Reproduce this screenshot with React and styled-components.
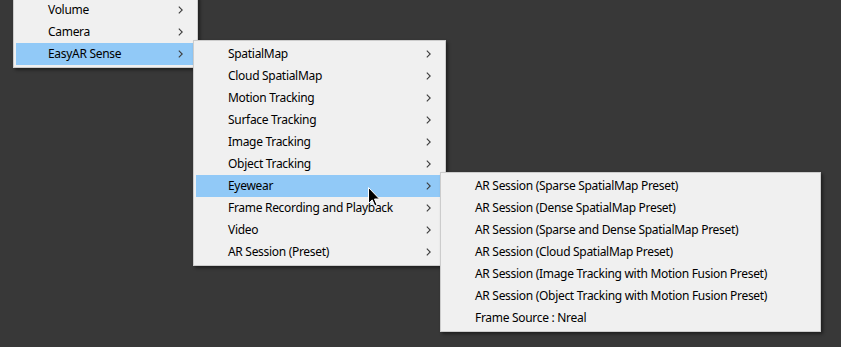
import React from "react";
import styled, { createGlobalStyle } from "styled-components";

const GlobalStyle = createGlobalStyle`
  html, body {
    margin: 0;
    padding: 0;
    background: #383838;
  }
  body {
    font-family: "Noto Sans", "Open Sans", sans-serif;
  }
`;

const rootMenu = ["Volume", "Camera", "EasyAR Sense"];

const senseMenu = [
  "SpatialMap",
  "Cloud SpatialMap",
  "Motion Tracking",
  "Surface Tracking",
  "Image Tracking",
  "Object Tracking",
  "Eyewear",
  "Frame Recording and Playback",
  "Video",
  "AR Session (Preset)",
];

const eyewearMenu = [
  "AR Session (Sparse SpatialMap Preset)",
  "AR Session (Dense SpatialMap Preset)",
  "AR Session (Sparse and Dense SpatialMap Preset)",
  "AR Session (Cloud SpatialMap Preset)",
  "AR Session (Image Tracking with Motion Fusion Preset)",
  "AR Session (Object Tracking with Motion Fusion Preset)",
  "Frame Source : Nreal",
];

const Chevron = () => (
  <svg width="5" height="8" viewBox="0 0 5 8">
    <path d="M0.8 0.6 L4.2 4 L0.8 7.4" fill="none" stroke="#3c3c3c" strokeWidth="1.1" />
  </svg>
);

const Cursor = () => (
  <svg width="13" height="21" viewBox="0 0 13 21">
    <path
      d="M0.5 0.5 L0.5 16.5 L4.2 12.9 L6.8 19 L9 18 L6.5 12 L11.5 12 Z"
      fill="#000"
      stroke="#fff"
      strokeWidth="1"
      strokeLinejoin="round"
    />
  </svg>
);

const Menu = ({ items, active, left, top, width, submenu }) => (
  <MenuBox $left={left} $top={top} $width={width}>
    {items.map((label) => (
      <Item key={label} $active={label === active}>
        <Label>{label}</Label>
        {submenu && (
          <Arrow>
            <Chevron />
          </Arrow>
        )}
      </Item>
    ))}
  </MenuBox>
);

export default function App() {
  return (
    <>
      <GlobalStyle />
      <Page>
        <Menu items={rootMenu} active="EasyAR Sense" left={13} top={-4} width={185} submenu />
        <Menu items={senseMenu} active="Eyewear" left={193} top={40} width={253} submenu />
        <Menu items={eyewearMenu} left={440} top={172} width={381} />
        <Pointer>
          <Cursor />
        </Pointer>
      </Page>
    </>
  );
}

const Page = styled.div`
  position: relative;
  width: 841px;
  height: 347px;
  overflow: hidden;
  background: #383838;
`;

const MenuBox = styled.div`
  position: absolute;
  left: ${(p) => p.$left}px;
  top: ${(p) => p.$top}px;
  width: ${(p) => p.$width}px;
  box-sizing: border-box;
  display: flex;
  flex-direction: column;
  padding: 2px;
  background: #f0f0f0;
  border: 1px solid #cccccc;
  box-shadow: 2px 2px 3px rgba(0, 0, 0, 0.45);
`;

const Item = styled.div`
  display: flex;
  align-items: center;
  height: 22px;
  padding: 0 12px 0 32px;
  background: ${(p) => (p.$active ? "#91c9f7" : "transparent")};
  color: #000;
  font-size: 12px;
  letter-spacing: -0.3px;
  white-space: nowrap;
`;

const Label = styled.span`
  flex: 1;
  line-height: 22px;
`;

const Arrow = styled.span`
  display: flex;
  align-items: center;
`;

const Pointer = styled.div`
  position: absolute;
  left: 368px;
  top: 187px;
  display: flex;
`;
